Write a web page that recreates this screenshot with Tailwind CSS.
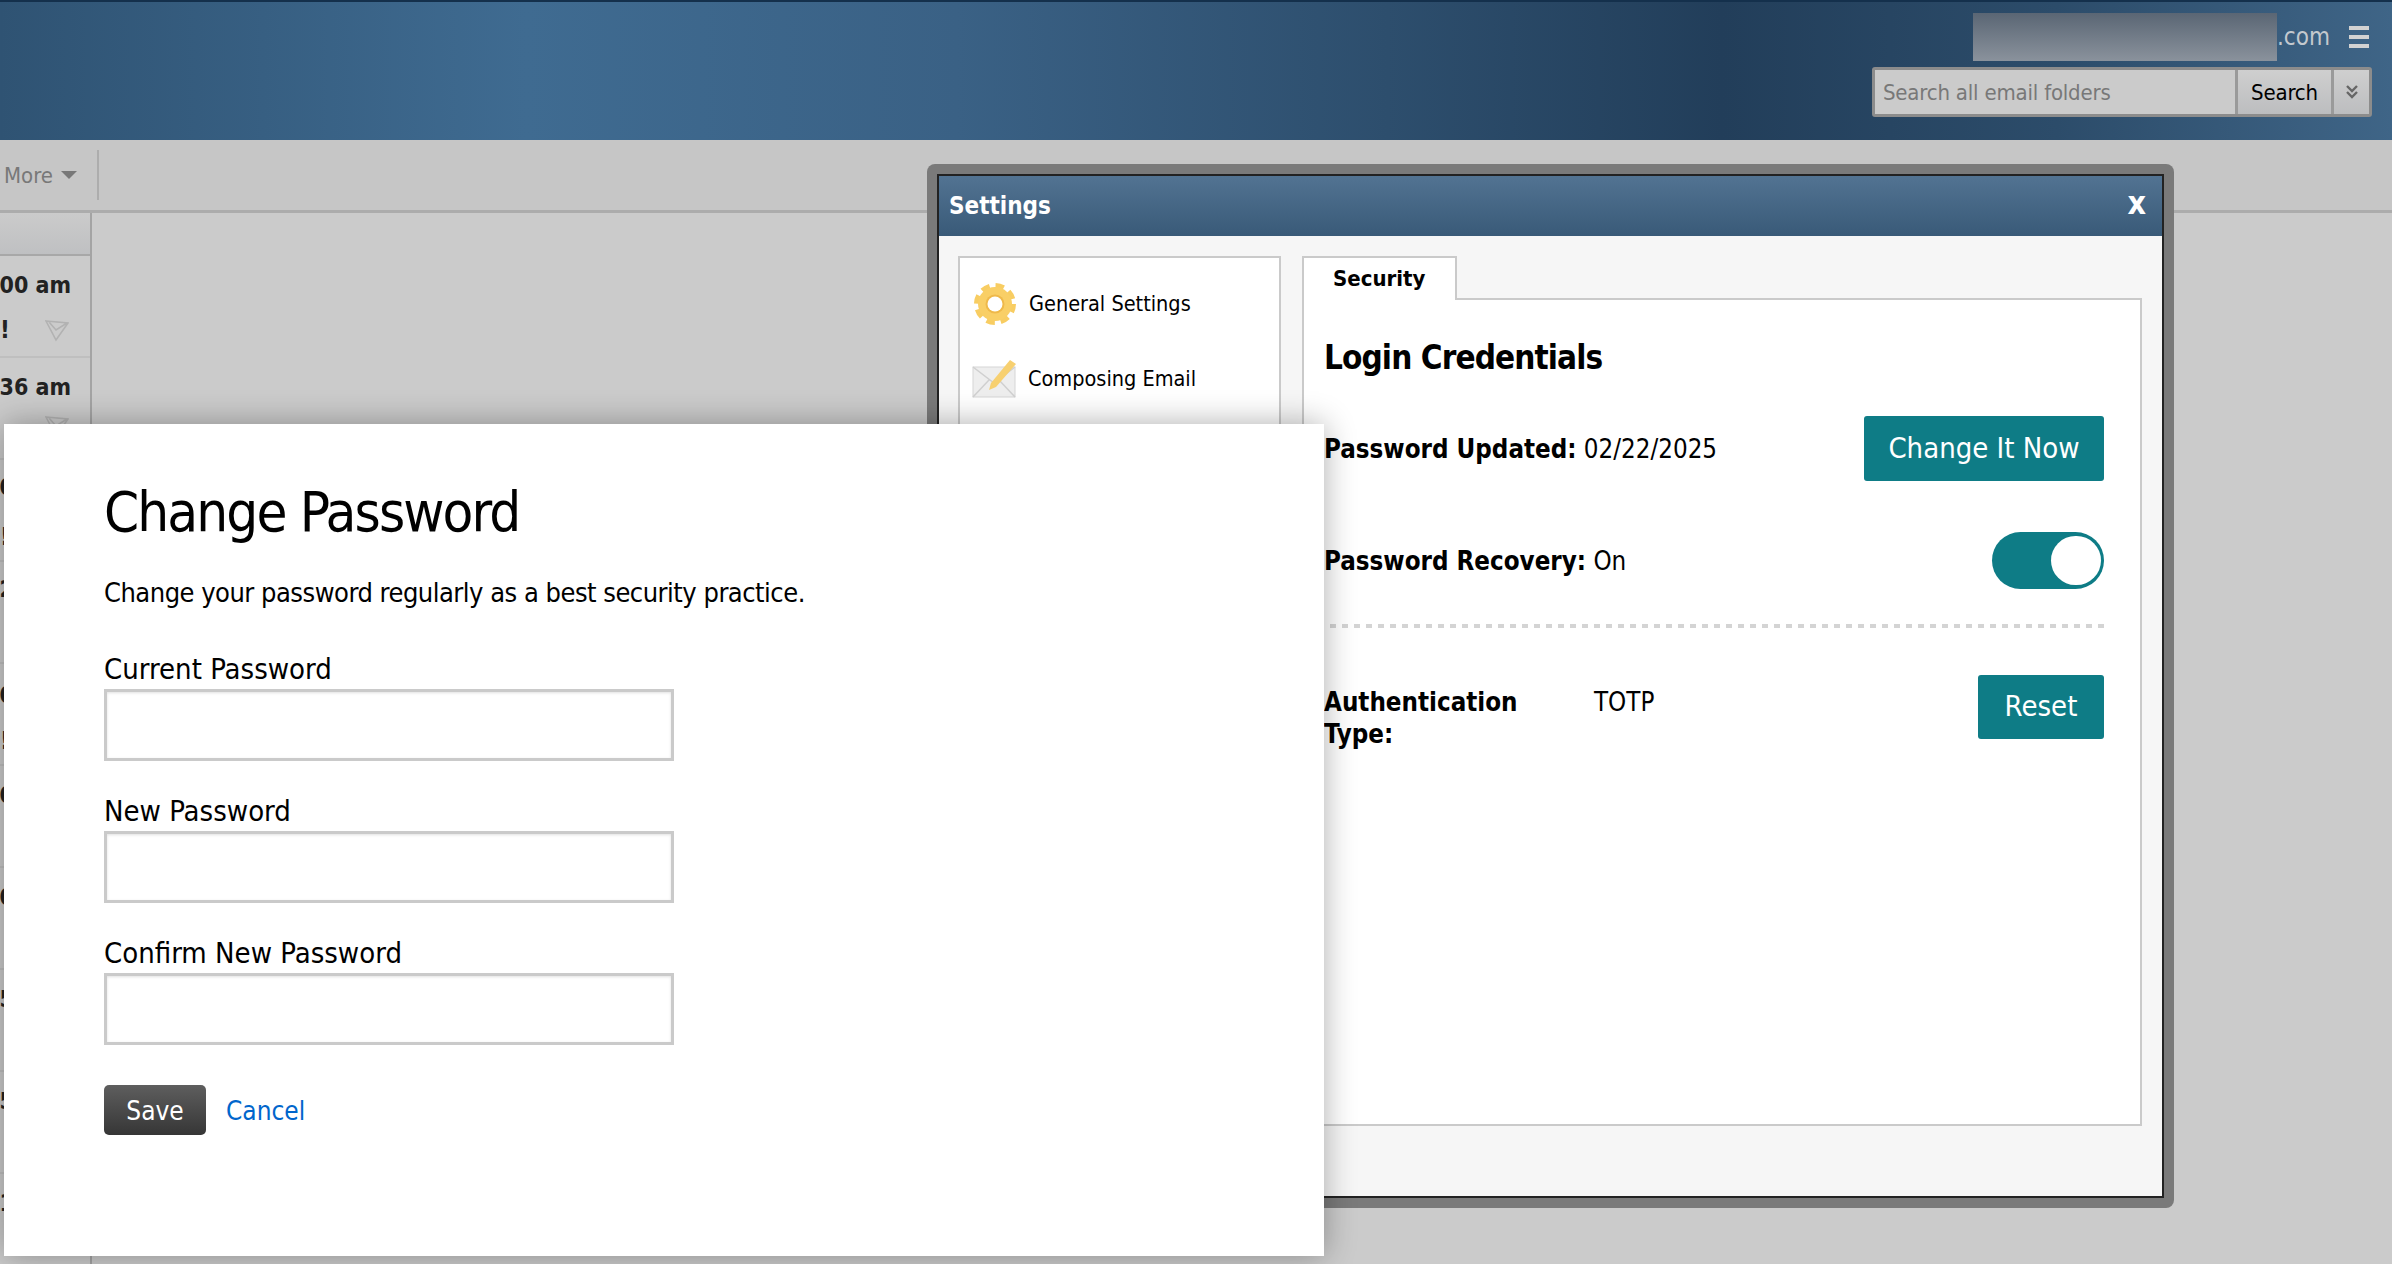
<!DOCTYPE html>
<html lang="en">
<head>
    <meta charset="UTF-8">
    <title>Settings</title>
    <script src="https://cdn.jsdelivr.net/npm/@tailwindcss/browser@4"></script>
</head>
<body class="relative w-[2392px] h-[1264px] overflow-hidden bg-[#cbcbcb] font-['DejaVu_Sans_Condensed','DejaVu_Sans',sans-serif] text-black">

    <!-- Top bar -->
    <header class="h-[140px] border-t-2 border-[#14304c] bg-[linear-gradient(90deg,#2f5373_0%,#3f6b91_22%,#3a6185_40%,#2d4e6d_58%,#223e5a_72%,#2c4c6a_86%,#3f6587_100%)] flex flex-col items-end pr-5 pt-2.5">
        <div class="flex items-center h-[50px]">
            <div class="w-[304px] h-[48px] bg-[linear-gradient(180deg,#5a6674,#8a929c)]"></div>
            <span class="text-[24px] leading-none text-[#c4c9ce] w-[54px]">.com</span>
            <div class="ml-[18px] mr-[3px] w-5 flex flex-col gap-[5px]">
                <span class="h-1 bg-[#d2d2d2]"></span>
                <span class="h-1 bg-[#d2d2d2]"></span>
                <span class="h-1 bg-[#d2d2d2]"></span>
            </div>
        </div>
        <div class="mt-[5px] w-[500px] h-[50px] flex border-[3px] border-[#8c8c8c] rounded-[3px] bg-[#cbcbcb] text-[22px] tracking-[-0.2px]">
            <div class="w-[360px] pl-2 flex items-center text-[#787878]">Search all email folders</div>
            <div class="w-[96px] border-l-[3px] border-[#9a9a9a] bg-[linear-gradient(180deg,#cfcfcf,#bcbdbf)] flex items-center justify-center">Search</div>
            <div class="flex-1 border-l-[3px] border-[#9a9a9a] bg-[linear-gradient(180deg,#cfcfcf,#bcbdbf)] flex items-center justify-center">
                <svg width="12" height="16" viewBox="0 0 12 16" fill="none" stroke="#666" stroke-width="2.4"><path d="M1 2l5 5 5-5M1 8l5 5 5-5"/></svg>
            </div>
        </div>
    </header>

    <!-- Toolbar -->
    <div class="h-[73px] bg-[#c6c6c6] border-b-[3px] border-[#acacac] flex items-center">
        <div class="w-[99px] h-[50px] border-r-2 border-[#adadad] pl-1 flex items-center gap-2 text-[22px] text-[#787878]">
            More
            <svg width="16" height="8" viewBox="0 0 16 8"><path d="M0 0h16l-8 8z" fill="#787878"/></svg>
        </div>
    </div>

    <!-- Message list behind the dialogs -->
    <div class="w-[92px] h-[1051px] border-r-2 border-[#a4a4a4] overflow-hidden">
        <div class="h-[43px] border-b-2 border-[#a8a8a8] bg-[linear-gradient(180deg,#cbcbcb,#bfc0c2)]"></div>
        <div class="flex flex-col text-[23px] font-bold text-[#222] whitespace-nowrap">
            <div class="h-[102px] border-b-2 border-[#bfbfbf]">
                <div class="flex justify-end pr-[19px] pt-[12px]">00 am</div>
                <div class="flex items-center pt-[9px] text-[24px]">!
                    <svg class="ml-auto mr-[21px]" width="24" height="24" viewBox="0 0 24 24" fill="none" stroke="#b2b2b2" stroke-width="1.6"><path d="M1 3l22 2-12 17zM4 4l7 8 11-7"/></svg>
                </div>
            </div>
            <div class="h-[102px] border-b-2 border-[#bfbfbf]">
                <div class="flex justify-end pr-[19px] pt-[12px]">36 am</div>
                <div class="flex items-center pt-[9px]">
                    <svg class="ml-auto mr-[21px]" width="24" height="24" viewBox="0 0 24 24" fill="none" stroke="#b2b2b2" stroke-width="1.6"><path d="M1 3l22 2-12 17zM4 4l7 8 11-7"/></svg>
                </div>
            </div>
            <div class="h-[102px] border-b-2 border-[#bfbfbf]">
                <div class="flex justify-end pr-[19px] pt-[10px]">00 am</div>
                <div class="pt-[14px] text-[24px]">!</div>
            </div>
            <div class="h-[102px] border-b-2 border-[#bfbfbf] flex justify-end pr-[19px] pt-[10px]">25 am</div>
            <div class="h-[102px] border-b-2 border-[#bfbfbf]">
                <div class="flex justify-end pr-[19px] pt-[14px]">05 am</div>
                <div class="pt-[10px] text-[24px]">!</div>
            </div>
            <div class="h-[102px] border-b-2 border-[#bfbfbf] flex justify-end pr-[19px] pt-[12px]">00 am</div>
            <div class="h-[102px] border-b-2 border-[#bfbfbf] flex justify-end pr-[19px] pt-[12px]">00 am</div>
            <div class="h-[102px] border-b-2 border-[#bfbfbf] flex justify-end pr-[19px] pt-[12px]">50 am</div>
            <div class="h-[102px] border-b-2 border-[#bfbfbf] flex justify-end pr-[19px] pt-[12px]">55 am</div>
            <div class="h-[102px] flex justify-end pr-[19px] pt-[12px]">10 am</div>
        </div>
    </div>

    <!-- Settings window -->
    <div class="absolute left-[927px] top-[164px] w-[1247px] h-[1044px] bg-[#7a7a7a] rounded-[8px] p-[10px]">
        <div class="h-full border-2 border-[#222] bg-[#f6f6f6] flex flex-col">
            <div class="h-[60px] bg-[linear-gradient(180deg,#527392,#395a78)] flex items-center justify-between pl-[10px] pr-[16px] text-white font-bold text-[24px]">
                <span>Settings</span>
                <span class="text-[32px] leading-none -mt-[6px] font-black">x</span>
            </div>
            <div class="flex-1 flex px-[19px] pt-[20px]">
                <!-- Side menu -->
                <div class="w-[323px] h-[600px] border-2 border-[#cacaca] bg-white pl-[12px] pt-[21px] text-[21.5px]">
                    <div class="flex items-center h-[50px] gap-[12px]">
                        <svg class="ml-[1px]" width="44" height="44" viewBox="0 0 44 44">
                            <circle cx="22" cy="22" r="18.5" fill="none" stroke="#f8cd62" stroke-width="5" stroke-dasharray="8.5 6.03"/>
                            <circle cx="22" cy="22" r="17" fill="#f9cf66"/>
                            <circle cx="22" cy="22" r="9.5" fill="#efb94a"/>
                            <circle cx="22" cy="22" r="7.5" fill="#fff"/>
                        </svg>
                        <span>General Settings</span>
                    </div>
                    <div class="flex items-center h-[50px] mt-[25px] gap-[10px]">
                        <svg width="46" height="40" viewBox="0 0 46 40">
                            <rect x="1" y="8" width="42" height="30" fill="#eeeeee" stroke="#d6d6d6"/>
                            <path d="M1 8l21 16L43 8M1 38l16-17M43 38L27 21" fill="none" stroke="#d0d0d0" stroke-width="1.5"/>
                            <path d="M38 1l6 4-20 23-7 3 2-7z" fill="#f7d070"/>
                        </svg>
                        <span>Composing Email</span>
                    </div>
                </div>
                <!-- Security tab -->
                <div class="ml-[21px] w-[840px] flex flex-col">
                    <div class="flex h-[44px] relative z-10">
                        <div class="w-[155px] h-[44px] border-2 border-b-0 border-[#cacaca] bg-white pl-[29px] pt-[4px] font-bold text-[22px]">Security</div>
                    </div>
                    <div class="-mt-[2px] h-[828px] border-2 border-[#cacaca] bg-white px-[20px]">
                        <h2 class="font-bold text-[33px] tracking-[-0.9px] leading-none mt-[41px]">Login Credentials</h2>
                        <div class="flex items-center justify-between mt-[42px] mr-[16px] text-[25.7px]">
                            <div class="pt-[2px]"><span class="font-bold">Password Updated:</span> 02/22/2025</div>
                            <button class="w-[240px] h-[65px] bg-[#0e7c86] rounded-[3px] text-white text-[29px]">Change It Now</button>
                        </div>
                        <div class="flex items-center justify-between mt-[51px] mr-[16px] text-[25.7px]">
                            <div class="pt-[2px]"><span class="font-bold">Password Recovery:</span> On</div>
                            <div class="w-[112px] h-[57px] bg-[#0e7c86] rounded-full flex justify-end items-center pr-[3px]">
                                <div class="w-[50px] h-[49px] bg-white rounded-full"></div>
                            </div>
                        </div>
                        <div class="mt-[35px] mr-[16px] h-[4px] bg-[repeating-linear-gradient(90deg,transparent_0_6px,#d4d4d4_6px_12px)]"></div>
                        <div class="flex justify-between mt-[47px] mr-[16px] text-[25.7px]">
                            <div class="flex leading-[32px] pt-[11px]">
                                <div class="w-[270px] font-bold">Authentication<br>Type:</div>
                                <div>TOTP</div>
                            </div>
                            <button class="w-[126px] h-[64px] bg-[#0e7c86] rounded-[3px] text-white text-[29px]">Reset</button>
                        </div>
                    </div>
                </div>
            </div>
        </div>
    </div>

    <!-- Change Password dialog -->
    <div class="absolute left-[4px] top-[424px] w-[1320px] h-[832px] bg-white shadow-[0_0_30px_rgba(0,0,0,0.32)] pl-[100px] pt-[53px]">
        <h1 class="text-[56px] tracking-[-1.9px] leading-[70px]">Change Password</h1>
        <p class="mt-[29px] text-[27px] tracking-[-0.5px] leading-[34px]">Change your password regularly as a best security practice.</p>
        <div class="mt-[42px] flex flex-col w-[570px] text-[29px]">
            <label class="leading-[34px] h-[37px]">Current Password</label>
            <input type="text" class="h-[72px] border-[3px] border-[#cacaca] bg-white shadow-[inset_0_1px_3px_rgba(0,0,0,0.12)]">
            <label class="mt-[33px] leading-[34px] h-[37px]">New Password</label>
            <input type="text" class="h-[72px] border-[3px] border-[#cacaca] bg-white shadow-[inset_0_1px_3px_rgba(0,0,0,0.12)]">
            <label class="mt-[33px] leading-[34px] h-[37px]">Confirm New Password</label>
            <input type="text" class="h-[72px] border-[3px] border-[#cacaca] bg-white shadow-[inset_0_1px_3px_rgba(0,0,0,0.12)]">
        </div>
        <div class="mt-[40px] flex items-center gap-5">
            <button class="w-[102px] h-[50px] rounded-[5px] bg-[linear-gradient(180deg,#5e5e5e,#363636)] text-white text-[26px] pt-[2px]">Save</button>
            <a class="text-[#0066cc] text-[26px] pt-[2px]">Cancel</a>
        </div>
    </div>

</body>
</html>
